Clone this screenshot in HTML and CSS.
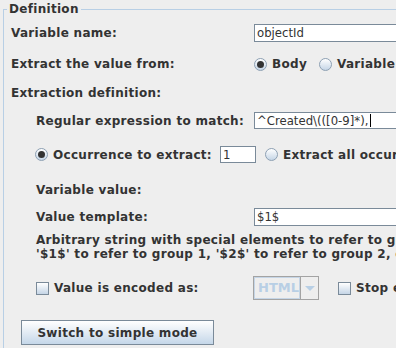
FILE: index.html
```html
<!DOCTYPE html>
<html lang="en">
<head>
    <meta charset="utf-8">
    <link rel="stylesheet" href="styles.css">
    <title>Regular Expression Extractor</title>
</head>
<body>
<fieldset class="definition">
    <legend>Definition</legend>
    <div class="row row-name">
        <span class="label">Variable name:</span>
        <input class="field wide" type="text" value="objectId">
    </div>
    <div class="row row-from">
        <span class="label">Extract the value from:</span>
        <span class="radio checked"></span><span class="opt">Body</span>
        <span class="radio"></span><span class="opt">Variable</span>
    </div>
    <div class="row row-def">
        <span class="label">Extraction definition:</span>
    </div>
    <div class="sub">
        <div class="row row-regex">
            <span class="label">Regular expression to match:</span>
            <div class="field wide regex">^Created\(([0-9]*),<span class="caret"></span></div>
        </div>
        <div class="row row-occ">
            <span class="radio checked"></span>
            <span class="occ-label">Occurrence to extract:</span>
            <input class="field small" type="text" value="1">
            <span class="radio"></span><span class="opt">Extract all occurrences</span>
        </div>
        <div class="row row-value">
            <span class="label">Variable value:</span>
        </div>
        <div class="row row-template">
            <span class="label">Value template:</span>
            <input class="field wide" type="text" value="$1$">
        </div>
        <p class="help">
            Arbitrary string with special elements to refer to groups within the Regular Expression:<br>
            '$1$' to refer to group 1, '$2$' to refer to group 2, etc.
        </p>
        <div class="row row-encoded">
            <span class="check"></span>
            <span class="enc-label">Value is encoded as:</span>
            <div class="combo">
                <span class="combo-value">HTML</span>
                <span class="combo-arrow"></span>
            </div>
            <span class="check"></span><span class="opt">Stop extraction</span>
        </div>
    </div>
    <button class="switch-button">Switch to simple mode</button>
</fieldset>
</body>
</html>
```

FILE: styles.css
```css
html, body {
  margin: 0;
  height: 100%;
  overflow: hidden;
}

body {
  background-color: #eeeeee;
  color: #333333;
  font: bold 12px "DejaVu Sans", sans-serif;
  letter-spacing: 0.3px;
}

.definition {
  margin: 2px 0 0 3px;
  padding: 0 0 0 7px;
  width: 520px;
  height: 400px;
  border: 1px solid #b8cfe5;
  box-sizing: border-box;
}

.definition legend {
  margin-left: -4px;
  padding: 0 2px;
  line-height: 15px;
}

.row {
  display: flex;
  align-items: center;
  white-space: nowrap;
}

.label {
  width: 243px;
  flex: none;
}

.row-name { height: 18px; margin-top: 7px; }
.row-from { height: 18px; margin-top: 13px; }
.row-def { height: 16px; margin-top: 12px; }

/* 하위 항목 들여쓰기 */
.sub {
  padding-left: 25px;
}

.sub .label {
  width: 218px;
}

.row-regex { height: 17px; margin-top: 11px; }
.row-occ { height: 17px; margin-top: 17px; }
.row-value { height: 16px; margin-top: 19px; }
.row-template { height: 18px; margin-top: 10px; }
.row-encoded { height: 24px; margin-top: 15px; }

.field {
  box-sizing: border-box;
  height: 100%;
  margin: 0;
  padding: 0 2px;
  border: 1px solid #7a8a99;
  background-color: #ffffff;
  color: #333333;
  font: 11.7px "DejaVu Sans", sans-serif;
  letter-spacing: 0;
  outline: none;
}

.wide {
  width: 200px;
  flex: none;
}

.regex {
  display: flex;
  align-items: center;
}

.caret {
  display: inline-block;
  width: 1px;
  height: 13px;
  margin-left: 2px;
  background-color: #000000;
}

.small {
  width: 36px;
  flex: none;
  margin-left: 4px;
}

.radio {
  position: relative;
  width: 11px;
  height: 11px;
  flex: none;
  margin-right: 5px;
  border: 1px solid #8da0b3;
  border-radius: 50%;
  background: linear-gradient(#ffffff, #c5d5e6);
}

.row-from .radio:first-of-type {
  margin-left: 4px;
}

.row-occ .radio:first-child {
  margin-left: -1px;
}

.occ-label {
  width: 163px;
  flex: none;
}

.radio.checked::after {
  content: "";
  position: absolute;
  left: 2px;
  top: 2px;
  width: 7px;
  height: 7px;
  border-radius: 50%;
  background-color: #333333;
}

.opt {
  margin-right: 12px;
}

.row-occ .small + .radio {
  margin-left: 9px;
}

.help {
  margin: 7px 0 0;
  line-height: 14px;
  white-space: nowrap;
}

.check {
  width: 11px;
  height: 11px;
  flex: none;
  margin-right: 5px;
  border: 1px solid #7a8a99;
  background: linear-gradient(#ffffff, #c5d5e6);
}

.enc-label {
  width: 199px;
  flex: none;
}

.combo {
  display: flex;
  box-sizing: border-box;
  width: 66px;
  height: 24px;
  margin-right: 19px;
  border: 1px solid #a3a3a3;
}

.combo-value {
  flex: 1;
  padding-left: 3px;
  border: 1px solid #c5d5e6;
  color: #b8cfe5;
  line-height: 20px;
  font-size: 13px;
  letter-spacing: 0;
}

.combo-arrow {
  position: relative;
  width: 18px;
  border-left: 1px solid #a3a3a3;
}

.combo-arrow::after {
  content: "";
  position: absolute;
  left: 4px;
  top: 9px;
  border-left: 5px solid transparent;
  border-right: 5px solid transparent;
  border-top: 5px solid #b8cfe5;
}

.switch-button {
  display: block;
  margin: 20px 0 0 10px;
  width: 193px;
  height: 25px;
  padding: 0;
  border: 1px solid #7a8a99;
  background: linear-gradient(#ffffff, #eef3f8 30%, #c5d7e9);
  color: #333333;
  font: bold 12px "DejaVu Sans", sans-serif;
  letter-spacing: 0.3px;
}
```
